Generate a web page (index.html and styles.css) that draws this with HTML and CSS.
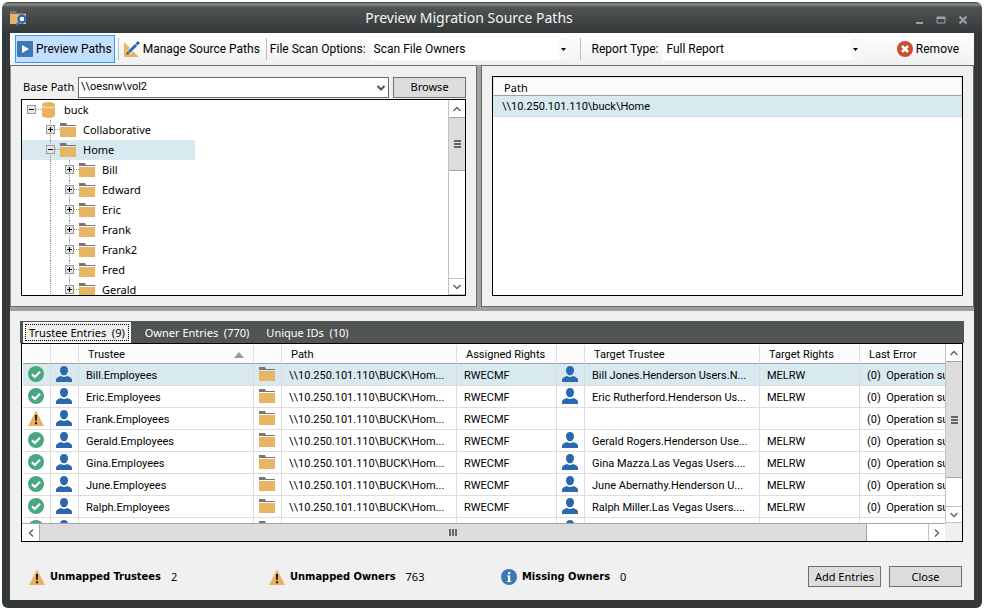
FILE: index.html
```html
<!DOCTYPE html>
<html lang="en">
<head>
  <meta charset="UTF-8">
  <title>Preview Migration Source Paths</title>
  <link rel="stylesheet" href="styles.css">
</head>
<body>

  <!-- Shared icons -->
  <svg class="sprite" aria-hidden="true">
    <symbol id="folder" viewBox="0 0 16 16">
      <path fill="#777" d="M0 1h6l1 2h9v1H0z"/>
      <path fill="#e9b565" d="M0 5h16v10H0z"/>
    </symbol>
    <symbol id="user" viewBox="0 0 16 16">
      <path fill="#2a69b0" d="M8 0c2.600 0 4 1.800 4 4.200C12 7 10.300 9.300 8 9.300S4 7 4 4.200C4 1.800 5.400 0 8 0z"/>
      <path fill="#2a69b0" d="M0 16v-2.200c0-1.700 1.600-2.800 5-3.800 1.600 1.300 4.400 1.300 6 0 3.400 1 5 2.100 5 3.800V16z"/>
    </symbol>
    <symbol id="ok" viewBox="0 0 16 16">
      <circle cx="8" cy="8" r="8" fill="#4ba781"/>
      <path d="M4 8.200l2.800 2.800L12 5.700" fill="none" stroke="#fff" stroke-width="2.200"/>
    </symbol>
    <symbol id="warn" viewBox="0 0 16 16">
      <path fill="#e9b161" d="M8 0.500L16 16H0z"/>
      <path fill="#111" d="M7 5h2l-.3 6H7.300zM7 12.200h2v2H7z"/>
    </symbol>
    <symbol id="info" viewBox="0 0 16 16">
      <circle cx="8" cy="8" r="8" fill="#3b78b5"/>
      <path fill="#fff" d="M7 3h2.200v2.200H7zM6 6.500h3.200V12h1v1H6v-1h1V7.500H6z"/>
    </symbol>
    <symbol id="chevron" viewBox="0 0 10 10">
      <path d="M1.500 7L5 3.500 8.500 7" fill="none" stroke="#666" stroke-width="1.500"/>
    </symbol>
  </svg>

  <div class="window">
    <header class="titlebar">
      <svg class="app-icon" viewBox="0 0 18 16">
        <path fill="#777" d="M0 1h6l1 2h9v1H0z"/>
        <path fill="#e9b565" d="M0 4h16v10H0z"/>
        <path d="M9 12.500l-3 3" stroke="#2a69b0" stroke-width="2"/>
        <circle cx="12" cy="9" r="3.500" fill="#fff" stroke="#2a69b0" stroke-width="2.500"/>
      </svg>
      <h1>Preview Migration Source Paths</h1>
      <div class="window-controls">
        <button aria-label="Minimize"><svg viewBox="0 0 10 10"><path fill="#9ba3aa" d="M2 7h7v2H2z"/></svg></button>
        <button aria-label="Maximize"><svg viewBox="0 0 10 10"><path d="M1 2h8v6H1z" fill="none" stroke="#9ba3aa"/><path fill="#9ba3aa" d="M1 2h8v2H1z"/></svg></button>
        <button aria-label="Close window"><svg viewBox="0 0 10 10"><path d="M1.500 1.500l7 7M8.500 1.500l-7 7" stroke="#9ba3aa" stroke-width="2.200"/></svg></button>
      </div>
    </header>

    <main class="content">
      <div class="toolbar">
        <button class="tool active">
          <svg class="icon" viewBox="0 0 16 16"><rect width="16" height="16" rx="1" fill="#3b78b5"/><path fill="#fff" d="M5 4l7 4-7 4z"/></svg>
          Preview Paths
        </button>
        <span class="separator"></span>
        <button class="tool manage">
          <svg class="icon" viewBox="0 0 16 16">
            <path fill="#e9b565" d="M0 1l15 15H0z"/>
            <path fill="#fff" d="M3 9l4 4H3z"/>
            <path d="M4 12L14 2" stroke="#fff" stroke-width="4.500"/>
            <path d="M5 11L12 4" stroke="#2a69b0" stroke-width="3"/>
            <path d="M12.500 3.500L15 1" stroke="#2a69b0" stroke-width="3"/>
            <path fill="#555" d="M2 14l1.500-4 2.500 2.500z"/>
          </svg>
          Manage Source Paths
        </button>
        <span class="separator"></span>
        <label for="scan">File Scan Options:</label>
        <span class="flat-select">
          <select id="scan"><option>Scan File Owners</option></select>
          <svg viewBox="0 0 5 3"><path d="M0 0h5L2.500 3z"/></svg>
        </span>
        <span class="separator wide"></span>
        <label for="report">Report Type:</label>
        <span class="flat-select">
          <select id="report"><option>Full Report</option></select>
          <svg viewBox="0 0 5 3"><path d="M0 0h5L2.500 3z"/></svg>
        </span>
        <button class="tool remove">
          <svg class="icon" viewBox="0 0 16 16"><circle cx="8" cy="8" r="8" fill="#cf4b32"/><path d="M5 5l6 6M11 5l-6 6" stroke="#fff" stroke-width="2.500"/></svg>
          Remove
        </button>
      </div>

      <div class="panels">
        <section class="panel source">
          <div class="base-path">
            <label for="base">Base Path</label>
            <span class="combo">
              <select id="base"><option>\\oesnw\vol2</option></select>
              <svg viewBox="0 0 10 10"><path d="M1.500 3L5 6.500 8.500 3" fill="none" stroke="#555" stroke-width="2"/></svg>
            </span>
            <button class="btn">Browse</button>
          </div>
          <div class="tree-box">
            <ul class="tree">
              <li class="root"><button class="toggle open" aria-label="Collapse"></button><svg class="icon" viewBox="0 0 16 16"><path fill="#e9b161" d="M1 2.500v11C1 15 4 16 7.500 16s6.500-1 6.500-2.500v-11z"/><ellipse cx="7.500" cy="2.500" rx="6.500" ry="2.500" fill="#e9b161"/><path d="M1 3.500c0 3 13 3 13 0" fill="none" stroke="#fbe9cc"/></svg>buck</li>
              <li class="level1"><button class="toggle" aria-label="Expand"></button><svg class="icon"><use href="#folder"/></svg>Collaborative</li>
              <li class="level1 selected"><button class="toggle open" aria-label="Collapse"></button><svg class="icon"><use href="#folder"/></svg>Home</li>
              <li class="level2"><button class="toggle" aria-label="Expand"></button><svg class="icon"><use href="#folder"/></svg>Bill</li>
              <li class="level2"><button class="toggle" aria-label="Expand"></button><svg class="icon"><use href="#folder"/></svg>Edward</li>
              <li class="level2"><button class="toggle" aria-label="Expand"></button><svg class="icon"><use href="#folder"/></svg>Eric</li>
              <li class="level2"><button class="toggle" aria-label="Expand"></button><svg class="icon"><use href="#folder"/></svg>Frank</li>
              <li class="level2"><button class="toggle" aria-label="Expand"></button><svg class="icon"><use href="#folder"/></svg>Frank2</li>
              <li class="level2"><button class="toggle" aria-label="Expand"></button><svg class="icon"><use href="#folder"/></svg>Fred</li>
              <li class="level2"><button class="toggle" aria-label="Expand"></button><svg class="icon"><use href="#folder"/></svg>Gerald</li>
            </ul>
            <div class="vscroll">
              <button aria-label="Scroll up"><svg><use href="#chevron"/></svg></button>
              <div class="thumb tree-thumb"><i></i></div>
              <div class="track"></div>
              <button class="down" aria-label="Scroll down"><svg><use href="#chevron"/></svg></button>
            </div>
          </div>
        </section>

        <section class="panel target">
          <table class="paths">
            <thead><tr><th>Path</th></tr></thead>
            <tbody><tr><td>\\10.250.101.110\buck\Home</td></tr></tbody>
          </table>
        </section>
      </div>

      <section class="entries">
        <div class="tabs" role="tablist">
          <button class="tab active" role="tab" aria-selected="true">Trustee Entries&nbsp; (9)</button>
          <button class="tab" role="tab">Owner Entries&nbsp; (770)</button>
          <button class="tab" role="tab">Unique IDs&nbsp; (10)</button>
        </div>

        <div class="grid-box">
          <div class="grid-view">
            <table class="grid">
              <colgroup>
                <col class="c-icon"><col class="c-icon"><col class="c-name"><col class="c-icon"><col class="c-name">
                <col class="c-rights"><col class="c-icon"><col class="c-name"><col class="c-rights"><col class="c-error">
              </colgroup>
              <thead>
                <tr>
                  <th></th><th></th>
                  <th><span class="sorted">Trustee <svg viewBox="0 0 10 6"><path fill="#999" d="M5 0l5 6H0z"/></svg></span></th>
                  <th></th><th>Path</th><th>Assigned Rights</th><th></th><th>Target Trustee</th><th>Target Rights</th><th>Last Error</th>
                </tr>
              </thead>
              <tbody>
                <tr class="selected">
                  <td><svg class="icon"><use href="#ok"/></svg></td><td><svg class="icon"><use href="#user"/></svg></td><td>Bill.Employees</td>
                  <td><svg class="icon"><use href="#folder"/></svg></td><td>\\10.250.101.110\BUCK\Hom...</td><td>RWECMF</td>
                  <td><svg class="icon"><use href="#user"/></svg></td><td>Bill Jones.Henderson Users.N...</td><td>MELRW</td><td>(0)&nbsp; Operation successful</td>
                </tr>
                <tr>
                  <td><svg class="icon"><use href="#ok"/></svg></td><td><svg class="icon"><use href="#user"/></svg></td><td>Eric.Employees</td>
                  <td><svg class="icon"><use href="#folder"/></svg></td><td>\\10.250.101.110\BUCK\Hom...</td><td>RWECMF</td>
                  <td><svg class="icon"><use href="#user"/></svg></td><td>Eric Rutherford.Henderson Us...</td><td>MELRW</td><td>(0)&nbsp; Operation successful</td>
                </tr>
                <tr>
                  <td><svg class="icon"><use href="#warn"/></svg></td><td><svg class="icon"><use href="#user"/></svg></td><td>Frank.Employees</td>
                  <td><svg class="icon"><use href="#folder"/></svg></td><td>\\10.250.101.110\BUCK\Hom...</td><td>RWECMF</td>
                  <td></td><td></td><td></td><td>(0)&nbsp; Operation successful</td>
                </tr>
                <tr>
                  <td><svg class="icon"><use href="#ok"/></svg></td><td><svg class="icon"><use href="#user"/></svg></td><td>Gerald.Employees</td>
                  <td><svg class="icon"><use href="#folder"/></svg></td><td>\\10.250.101.110\BUCK\Hom...</td><td>RWECMF</td>
                  <td><svg class="icon"><use href="#user"/></svg></td><td>Gerald Rogers.Henderson Use...</td><td>MELRW</td><td>(0)&nbsp; Operation successful</td>
                </tr>
                <tr>
                  <td><svg class="icon"><use href="#ok"/></svg></td><td><svg class="icon"><use href="#user"/></svg></td><td>Gina.Employees</td>
                  <td><svg class="icon"><use href="#folder"/></svg></td><td>\\10.250.101.110\BUCK\Hom...</td><td>RWECMF</td>
                  <td><svg class="icon"><use href="#user"/></svg></td><td>Gina Mazza.Las Vegas Users....</td><td>MELRW</td><td>(0)&nbsp; Operation successful</td>
                </tr>
                <tr>
                  <td><svg class="icon"><use href="#ok"/></svg></td><td><svg class="icon"><use href="#user"/></svg></td><td>June.Employees</td>
                  <td><svg class="icon"><use href="#folder"/></svg></td><td>\\10.250.101.110\BUCK\Hom...</td><td>RWECMF</td>
                  <td><svg class="icon"><use href="#user"/></svg></td><td>June Abernathy.Henderson U...</td><td>MELRW</td><td>(0)&nbsp; Operation successful</td>
                </tr>
                <tr>
                  <td><svg class="icon"><use href="#ok"/></svg></td><td><svg class="icon"><use href="#user"/></svg></td><td>Ralph.Employees</td>
                  <td><svg class="icon"><use href="#folder"/></svg></td><td>\\10.250.101.110\BUCK\Hom...</td><td>RWECMF</td>
                  <td><svg class="icon"><use href="#user"/></svg></td><td>Ralph Miller.Las Vegas Users....</td><td>MELRW</td><td>(0)&nbsp; Operation successful</td>
                </tr>
                <tr>
                  <td><svg class="icon"><use href="#ok"/></svg></td><td><svg class="icon"><use href="#user"/></svg></td><td></td>
                  <td><svg class="icon"><use href="#folder"/></svg></td><td></td><td></td>
                  <td><svg class="icon"><use href="#user"/></svg></td><td></td><td></td><td></td>
                </tr>
              </tbody>
            </table>
          </div>
          <div class="vscroll">
            <button aria-label="Scroll up"><svg><use href="#chevron"/></svg></button>
            <div class="thumb grid-thumb"><i></i></div>
            <div class="track"></div>
            <button class="down" aria-label="Scroll down"><svg><use href="#chevron"/></svg></button>
          </div>
          <div class="hscroll">
            <button class="left" aria-label="Scroll left"><svg><use href="#chevron"/></svg></button>
            <div class="thumb"><i></i></div>
            <div class="track"></div>
            <button class="right" aria-label="Scroll right"><svg><use href="#chevron"/></svg></button>
          </div>
        </div>

        <footer class="summary">
          <p class="stat"><svg class="icon"><use href="#warn"/></svg><b>Unmapped Trustees</b> <span>2</span></p>
          <p class="stat"><svg class="icon"><use href="#warn"/></svg><b>Unmapped Owners</b> <span>763</span></p>
          <p class="stat"><svg class="icon"><use href="#info"/></svg><b>Missing Owners</b> <span>0</span></p>
          <div class="actions">
            <button class="btn">Add Entries</button>
            <button class="btn">Close</button>
          </div>
        </footer>
      </section>
    </main>
  </div>

</body>
</html>
```
FILE: styles.css
```css
/* Base */
* {
  box-sizing: border-box;
}
body {
  margin: 0;
  height: 100vh;
  padding: 2px 3px 2px 2px;
  background: #fff;
  color: #000;
  font: 11px/16px "Noto Sans", sans-serif;
}
button, select {
  font: inherit;
  color: inherit;
  margin: 0;
  padding: 0;
  border: 0;
  border-radius: 0;
  background: none;
}
svg {
  display: block;
  flex: none;
}
.sprite {
  position: absolute;
  width: 0;
  height: 0;
}
.icon {
  width: 16px;
  height: 16px;
}

/* Window frame */
.window {
  display: flex;
  flex-direction: column;
  height: 100%;
  padding: 0 8px 8px;
  border-radius: 6px;
  background: linear-gradient(#343838, #8b8e8c 2px, #6b6e6d 4px, #505453 5px, #343838 31px);
}
.titlebar {
  display: flex;
  align-items: center;
  height: 31px;
  flex: none;
}
.titlebar h1 {
  flex: 1;
  margin: 0;
  padding-right: 4px;
  color: #f4f4f4;
  font: 14px/20px "Noto Sans", sans-serif;
  text-align: center;
}
.app-icon {
  width: 18px;
  height: 16px;
}
.window-controls {
  display: flex;
  gap: 12px;
  padding: 4px 6px 0 0;
}
.window-controls svg {
  width: 10px;
  height: 10px;
}
.content {
  display: flex;
  flex-direction: column;
  flex: 1;
  min-height: 0;
  background: #f0f0f0;
}

/* Toolbar */
.toolbar {
  display: flex;
  align-items: center;
  flex: none;
  height: 32px;
  padding: 0 12px 0 5px;
  background: linear-gradient(#fff, #f0f0f0);
  font-family: Roboto, sans-serif;
  font-size: 12px;
  white-space: nowrap;
}
.tool {
  display: flex;
  align-items: center;
  gap: 3px;
  height: 28px;
  padding: 0 2px 0 1px;
  border: 1px solid transparent;
}
.tool.active {
  background: #c2dfff;
  border-color: #39f;
}
.tool.remove {
  margin-left: auto;
}
.separator {
  width: 1px;
  height: 22px;
  margin: 0 3px 0 3px;
  background: #bdbdbd;
}
.separator.wide {
  margin: 0 11px 0 10px;
}
.flat-select {
  position: relative;
  width: 199px;
  margin-left: 5px;
}
.flat-select select {
  display: block;
  width: 100%;
  height: 22px;
  padding-left: 3px;
  appearance: none;
  background: linear-gradient(90deg, #fff 188px, #f8f8f8 188px);
}
.flat-select svg {
  position: absolute;
  right: 4px;
  top: 10px;
  width: 5px;
  height: 3px;
  pointer-events: none;
}

/* Upper panels */
.panels {
  display: flex;
  flex: none;
  gap: 4px;
  padding-bottom: 4px;
  background: #a0a0a0;
}
.panel {
  height: 242px;
  padding: 10px;
  border: 1px solid #6b6b6b;
  background: #f0f0f0;
}
.source {
  flex: 465;
  border-left-color: #8b8b8b;
}
.target {
  flex: 492;
}
.base-path {
  display: flex;
  align-items: center;
  gap: 4px;
  height: 22px;
}
.base-path label {
  width: 53px;
  padding-left: 2px;
  white-space: nowrap;
}
.combo {
  position: relative;
  flex: 1;
}
.combo select {
  display: block;
  width: 100%;
  height: 21px;
  padding-left: 2px;
  border: 1px solid #6b6b6b;
  background: #fff;
  appearance: none;
  font-family: Roboto, sans-serif;
  font-size: 11px;
}
.combo svg {
  position: absolute;
  right: 3px;
  top: 6px;
  width: 10px;
  height: 10px;
  pointer-events: none;
}
.btn {
  width: 73px;
  height: 21px;
  border: 1px solid #707070;
  background: #ddd;
  font-size: 11px;
  line-height: 18px;
}

/* Tree */
.tree-box {
  display: flex;
  height: 197px;
  margin-top: 1px;
  border: 1px solid #000;
  background: #fff;
  overflow: hidden;
}
.tree {
  flex: 1;
  margin: 0;
  padding: 0;
  list-style: none;
}
.tree li {
  position: relative;
  display: flex;
  align-items: center;
  width: 173px;
  height: 20px;
  padding-left: 5px;
}
.tree li.level1 {
  padding-left: 24px;
}
.tree li.level2 {
  padding-left: 43px;
}
.tree li.selected {
  background: #d8eaf0;
}
.tree .icon {
  margin-right: 7px;
}
.toggle {
  position: relative;
  z-index: 1;
  width: 9px;
  height: 9px;
  margin: 0 5px 2px 0;
  border: 1px solid #999;
  background:
    linear-gradient(#000, #000) center / 5px 1px no-repeat,
    linear-gradient(#000, #000) center / 1px 5px no-repeat,
    #e6e6e6;
}
.toggle.open {
  background: linear-gradient(#000, #000) center / 5px 1px no-repeat, #e6e6e6;
}
.toggle::after {
  content: "";
  position: absolute;
  left: 8px;
  top: 3px;
  width: 5px;
  border-top: 1px dotted #999;
}
.level1::before, .level2::before, .level2::after {
  content: "";
  position: absolute;
  left: 28px;
  top: 0;
  height: 20px;
  border-left: 1px dotted #999;
}
.level2::after {
  left: 47px;
}

/* Scrollbars */
.vscroll {
  display: flex;
  flex-direction: column;
  flex: none;
  width: 17px;
  border-left: 1px solid #c2c2c2;
  background: #fff;
}
.vscroll button, .hscroll button {
  display: grid;
  place-items: center;
  flex: none;
}
.vscroll button {
  height: 17px;
}
.vscroll svg, .hscroll svg {
  width: 10px;
  height: 10px;
}
.vscroll .down {
  border-top: 1px solid #c2c2c2;
  border-bottom: 1px solid #c2c2c2;
}
.down svg {
  transform: rotate(180deg);
}
.thumb {
  display: grid;
  place-items: center;
  border: 1px solid #a6a6a6;
  background: #ddd;
}
.vscroll .thumb {
  flex: none;
  border-width: 1px 0;
}
.tree-thumb {
  height: 54px;
}
.grid-thumb {
  height: 117px;
}
.vscroll .thumb i {
  width: 7px;
  height: 8px;
  background: repeating-linear-gradient(#666 0 2px, transparent 2px 3px);
}
.track {
  flex: 1;
}
.hscroll {
  display: flex;
  grid-column: 1;
  border-top: 1px solid #a6a6a6;
  background: #fff;
}
.hscroll button {
  width: 17px;
}
.hscroll .thumb {
  flex: 6;
  border-width: 0 1px;
}
.hscroll .thumb i {
  width: 8px;
  height: 7px;
  background: repeating-linear-gradient(90deg, #666 0 2px, transparent 2px 3px);
}
.hscroll .track {
  flex: 0 0 61px;
}
.left svg {
  transform: rotate(-90deg);
}
.hscroll .right {
  border-left: 1px solid #c2c2c2;
}
.right svg {
  transform: rotate(90deg);
}

/* Source paths list */
.target {
  display: flex;
}
.paths {
  flex: 1;
  display: block;
  height: 220px;
  border: 1px solid #000;
  border-spacing: 0;
  background: #fff;
}
.paths thead, .paths tbody, .paths tr, .paths th, .paths td {
  display: block;
}
.paths th {
  height: 19px;
  padding: 2px 10px 0;
  border: 1px solid #e0e0e0;
  border-bottom-color: #a0a0a0;
  background: #fcfcfc;
  font-weight: normal;
  text-align: left;
}
.paths td {
  height: 21px;
  padding: 3px 9px 0;
  border-bottom: 1px solid #ddd;
  background: #d8eaf0;
  font-family: Roboto, sans-serif;
}

/* Tabs */
.entries {
  display: flex;
  flex-direction: column;
  flex: 1;
  min-height: 0;
  padding: 10px 10px 0;
}
.tabs {
  display: flex;
  flex: none;
  height: 22px;
  padding: 1px 0 0 3px;
  background: #505453;
}
.tab {
  padding: 0 11px 0 6px;
  color: #fff;
  white-space: nowrap;
}
.tab.active {
  margin-right: 8px;
  padding: 0 4px;
  border: 2px solid #fff;
  border-width: 1px 2px;
  background: #f0f0f0;
  color: #000;
  outline: 1px dotted #000;
  outline-offset: -3px;
}

/* Entries grid */
.grid-box {
  display: grid;
  grid-template-columns: 1fr 17px;
  grid-template-rows: 1fr 18px;
  flex: none;
  height: 199px;
  margin: 0 1px;
  border: 1px solid #000;
}
.grid-view {
  min-width: 0;
  min-height: 0;
  padding: 1px 0 0 1px;
  overflow: hidden;
  background: #fff;
}
.grid {
  width: 1022px;
  table-layout: fixed;
  border-spacing: 0;
  font-family: Roboto, sans-serif;
}
.c-icon { width: 28px; }
.c-name { width: 175px; }
.c-rights { width: 100px; }
.c-error { width: 185px; }
.grid th {
  height: 19px;
  padding: 2px 9px 0;
  border-right: 1px solid #ddd;
  border-bottom: 1px solid #a0a0a0;
  background: #fcfcfc;
  font-weight: normal;
  text-align: left;
  white-space: nowrap;
}
.grid td {
  height: 22px;
  padding: 2px 7px 0;
  border-right: 1px solid #ddd;
  border-bottom: 1px solid #ddd;
  white-space: nowrap;
}
.grid td:has(.icon) {
  padding: 0 5px 1px;
}
.grid tr.selected td {
  background: #d8eaf0;
}
.sorted {
  display: flex;
  align-items: center;
  justify-content: space-between;
}
.sorted svg {
  width: 10px;
  height: 6px;
}

/* Footer */
.summary {
  display: grid;
  grid-template-columns: 240px 232px 1fr auto;
  align-items: center;
  padding: 24px 2px 0 9px;
  white-space: nowrap;
}
.stat {
  display: flex;
  align-items: center;
  gap: 5px;
  margin: 0;
}
.stat b {
  font-family: "DejaVu Sans Condensed", "DejaVu Sans", sans-serif;
}
.stat span {
  margin-left: 5px;
}
.actions {
  display: flex;
  gap: 8px;
}
```
